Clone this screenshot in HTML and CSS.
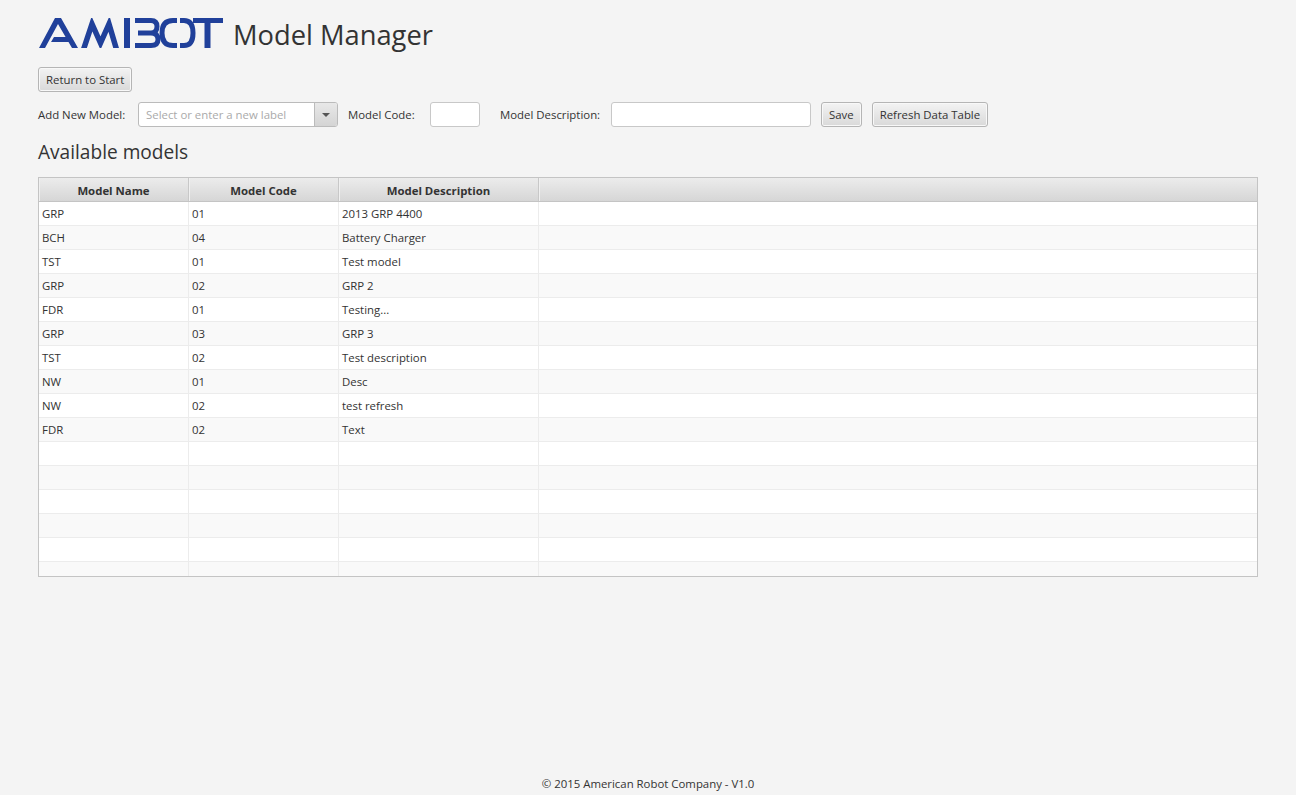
FILE: index.html
```html
<!DOCTYPE html>
<html lang="en">

<head>
    <meta charset="UTF-8">
    <title>Model Manager</title>
    <link rel="stylesheet" href="styles.css">
</head>

<body>
    <header class="page-header">
        <svg class="logo" width="186" height="30" viewBox="0 0 186 30" role="img" aria-label="AMIBOT">
            <g fill="#20409a">
                <polygon points="1,30 17,0 23,0 40,30 34,30 20,6 7,30" />
                <polygon points="16,19 30,19 33,24 13,24" />
            </g>
            <g fill="none" stroke="#20409a" stroke-width="5">
                <path d="M45 33 L54 6 L62.500 25 L71 6 L79 33" stroke-width="5.500" />
                <path d="M89 0 V30" stroke-width="6" />
                <path d="M97 2.500 H113 Q119 2.500 119 8.500 Q119 15 113 15 H100 H113 Q120 15 120 21.500 Q120 27.500 113 27.500 H97" />
                <path d="M139 2.500 H135 Q124 2.500 124 15 Q124 27.500 135 27.500 H139" />
                <path d="M142 2.500 H146 Q155 2.500 155 15 Q155 27.500 146 27.500 H142" />
                <path d="M155 2.500 H185" />
                <path d="M169.500 2 V30" stroke-width="6" />
            </g>
        </svg>
        <h1>Model Manager</h1>
    </header>

    <div class="toolbar">
        <button class="btn">Return to Start</button>
    </div>

    <div class="toolbar form-row">
        <label class="label-model">Add New Model:</label>
        <div class="combo">
            <span class="combo-text">Select or enter a new label</span>
            <span class="combo-arrow"></span>
        </div>
        <label class="label-code">Model Code:</label>
        <input class="field field-code" type="text">
        <label class="label-desc">Model Description:</label>
        <input class="field field-desc" type="text">
        <button class="btn btn-save">Save</button>
        <button class="btn">Refresh Data Table</button>
    </div>

    <h2>Available models</h2>

    <div class="table">
        <div class="table-head">
            <div class="col-name">Model Name</div>
            <div class="col-code">Model Code</div>
            <div class="col-desc">Model Description</div>
            <div class="col-rest"></div>
        </div>
        <div class="row"><div class="col-name">GRP</div><div class="col-code">01</div><div class="col-desc">2013 GRP 4400</div><div class="col-rest"></div></div>
        <div class="row"><div class="col-name">BCH</div><div class="col-code">04</div><div class="col-desc">Battery Charger</div><div class="col-rest"></div></div>
        <div class="row"><div class="col-name">TST</div><div class="col-code">01</div><div class="col-desc">Test model</div><div class="col-rest"></div></div>
        <div class="row"><div class="col-name">GRP</div><div class="col-code">02</div><div class="col-desc">GRP 2</div><div class="col-rest"></div></div>
        <div class="row"><div class="col-name">FDR</div><div class="col-code">01</div><div class="col-desc">Testing...</div><div class="col-rest"></div></div>
        <div class="row"><div class="col-name">GRP</div><div class="col-code">03</div><div class="col-desc">GRP 3</div><div class="col-rest"></div></div>
        <div class="row"><div class="col-name">TST</div><div class="col-code">02</div><div class="col-desc">Test description</div><div class="col-rest"></div></div>
        <div class="row"><div class="col-name">NW</div><div class="col-code">01</div><div class="col-desc">Desc</div><div class="col-rest"></div></div>
        <div class="row"><div class="col-name">NW</div><div class="col-code">02</div><div class="col-desc">test refresh</div><div class="col-rest"></div></div>
        <div class="row"><div class="col-name">FDR</div><div class="col-code">02</div><div class="col-desc">Text</div><div class="col-rest"></div></div>
        <div class="row"><div class="col-name"></div><div class="col-code"></div><div class="col-desc"></div><div class="col-rest"></div></div>
        <div class="row"><div class="col-name"></div><div class="col-code"></div><div class="col-desc"></div><div class="col-rest"></div></div>
        <div class="row"><div class="col-name"></div><div class="col-code"></div><div class="col-desc"></div><div class="col-rest"></div></div>
        <div class="row"><div class="col-name"></div><div class="col-code"></div><div class="col-desc"></div><div class="col-rest"></div></div>
        <div class="row"><div class="col-name"></div><div class="col-code"></div><div class="col-desc"></div><div class="col-rest"></div></div>
        <div class="row"><div class="col-name"></div><div class="col-code"></div><div class="col-desc"></div><div class="col-rest"></div></div>
    </div>

    <footer>© 2015 American Robot Company - V1.0</footer>
</body>

</html>
```

FILE: styles.css
```css
html,
body {
    height: 100%;
}

body {
    font-family: 'Open Sans', sans-serif;
    font-size: 11.4px;
    color: #333;
    background-color: #f4f4f4;
    margin: 0;
    padding: 0 38px;
    box-sizing: border-box;
    display: flex;
    flex-direction: column;
    overflow: hidden;
}

.page-header {
    display: flex;
    align-items: flex-end;
    gap: 9px;
    height: 52px;
}

.logo {
    margin-bottom: 4px;
    flex: none;
}

h1 {
    font-size: 27.3px;
    font-weight: 400;
    line-height: 36px;
    margin: 0 0 -1px;
    color: #333;
}

.toolbar {
    display: flex;
    align-items: center;
    margin-top: 15px;
}

.form-row {
    margin-top: 10px;
}

.btn {
    font-family: inherit;
    font-size: 11.4px;
    color: #333;
    height: 25px;
    padding: 0 7px;
    border: 1px solid #b5b5b5;
    border-radius: 3px;
    background: linear-gradient(#f3f3f3, #d9d9d9);
    box-shadow: inset 0 0 0 1px #f8f8f8;
}

.btn-save {
    margin: 0 10px;
}

.label-model {
    width: 100px;
}

.label-code {
    width: 82px;
    margin-left: 10px;
}

.label-desc {
    width: 111px;
    margin-left: 20px;
}

.combo {
    width: 200px;
    height: 25px;
    box-sizing: border-box;
    border: 1px solid #bbb;
    border-radius: 3px;
    background: #fff;
    display: flex;
    align-items: center;
    overflow: hidden;
}

.combo-text {
    flex: 1;
    padding-left: 7px;
    color: #aaa;
    white-space: nowrap;
}

.combo-arrow {
    width: 22px;
    height: 100%;
    border-left: 1px solid #bbb;
    background: linear-gradient(#e8e8e8, #d4d4d4);
    position: relative;
}

.combo-arrow::after {
    content: '';
    position: absolute;
    left: 7px;
    top: 10px;
    border-left: 4px solid transparent;
    border-right: 4px solid transparent;
    border-top: 4px solid #555;
}

.field {
    height: 25px;
    box-sizing: border-box;
    border: 1px solid #c8c8c8;
    border-radius: 3px;
    background: #fff;
    padding: 0 6px;
}

.field-code {
    width: 50px;
}

.field-desc {
    width: 200px;
}

h2 {
    font-size: 19.1px;
    font-weight: 400;
    line-height: 26px;
    margin: 12px 0 12px;
    color: #333;
}

.table {
    height: 400px;
    box-sizing: border-box;
    border: 1px solid #c4c4c4;
    background: #fff;
    overflow: hidden;
}

.table-head,
.row {
    display: flex;
}

.table-head {
    height: 24px;
    box-sizing: border-box;
    font-weight: 700;
    text-align: center;
    line-height: 25px;
    background: linear-gradient(#ececec, #d6d6d6);
    border-bottom: 1px solid #c4c4c4;
}

.table-head > div {
    border-right: 1px solid #c8c8c8;
    box-shadow: inset 1px 0 0 #f0f0f0;
}

.row {
    height: 24px;
    box-sizing: border-box;
    line-height: 23px;
    border-bottom: 1px solid #ececec;
}

.row:nth-child(odd) {
    background: #f9f9f9;
}

.row > div {
    padding-left: 3px;
    border-right: 1px solid #ececec;
}

.table-head > div,
.row > div {
    box-sizing: border-box;
}

.col-name,
.col-code {
    width: 150px;
}

.col-desc {
    width: 200px;
}

.col-rest {
    flex: 1;
    border-right: none !important;
}

footer {
    margin-top: auto;
    padding-bottom: 2px;
    text-align: center;
    line-height: 18px;
}
```
